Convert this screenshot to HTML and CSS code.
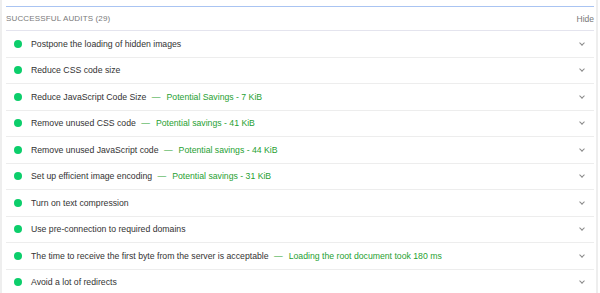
FILE: index.html
```html
<!DOCTYPE html>
<html lang="en">

<head>
    <meta charset="UTF-8">
    <meta name="viewport" content="width=device-width, initial-scale=1.0">
    <title>Successful audits</title>
    <link rel="stylesheet" href="styles.css">
</head>

<body>
    <div class="page">
        <div class="audits">
            <div class="audits-header">
                <span class="audits-title">Successful audits <span class="count">(29)</span></span>
                <span class="hide">Hide</span>
            </div>

            <ul class="audit-list">
                <li class="audit">
                    <span class="dot"></span>
                    <span class="audit-text">Postpone the loading of hidden images</span>
                    <span class="chevron"></span>
                </li>
                <li class="audit">
                    <span class="dot"></span>
                    <span class="audit-text">Reduce CSS code size</span>
                    <span class="chevron"></span>
                </li>
                <li class="audit">
                    <span class="dot"></span>
                    <span class="audit-text">Reduce JavaScript Code Size <span class="savings"><span class="dash">—</span>Potential Savings - 7 KiB</span></span>
                    <span class="chevron"></span>
                </li>
                <li class="audit">
                    <span class="dot"></span>
                    <span class="audit-text">Remove unused CSS code <span class="savings"><span class="dash">—</span>Potential savings - 41 KiB</span></span>
                    <span class="chevron"></span>
                </li>
                <li class="audit">
                    <span class="dot"></span>
                    <span class="audit-text">Remove unused JavaScript code <span class="savings"><span class="dash">—</span>Potential savings - 44 KiB</span></span>
                    <span class="chevron"></span>
                </li>
                <li class="audit">
                    <span class="dot"></span>
                    <span class="audit-text">Set up efficient image encoding <span class="savings"><span class="dash">—</span>Potential savings - 31 KiB</span></span>
                    <span class="chevron"></span>
                </li>
                <li class="audit">
                    <span class="dot"></span>
                    <span class="audit-text">Turn on text compression</span>
                    <span class="chevron"></span>
                </li>
                <li class="audit">
                    <span class="dot"></span>
                    <span class="audit-text">Use pre-connection to required domains</span>
                    <span class="chevron"></span>
                </li>
                <li class="audit">
                    <span class="dot"></span>
                    <span class="audit-text">The time to receive the first byte from the server is acceptable <span class="savings"><span class="dash">—</span>Loading the root document took 180 ms</span></span>
                    <span class="chevron"></span>
                </li>
                <li class="audit">
                    <span class="dot"></span>
                    <span class="audit-text">Avoid a lot of redirects</span>
                    <span class="chevron"></span>
                </li>
            </ul>
        </div>
    </div>
</body>

</html>
```

FILE: styles.css
```css
body {
    margin: 0;
    background: #fff;
    font-family: "Liberation Sans", Arial, sans-serif;
    color: #333;
    overflow: hidden;
}

.page {
    height: 293px;
    border-left: 2px solid #eee;
    border-right: 2px solid #eee;
    width: 598px;
    padding: 6px 2px 0 4px;
    box-sizing: border-box;
}

.audits {
    border-top: 1.5px solid #aac4f2;
}

.audits-header {
    display: flex;
    justify-content: space-between;
    align-items: center;
    height: 23px;
    border-bottom: 1px solid #e4e4ee;
}

.audits-title {
    font-size: 8px;
    text-transform: uppercase;
    letter-spacing: 0.15px;
    color: #7a7a7a;
}

.hide {
    font-size: 8.5px;
    color: #777;
}

.audit-list {
    list-style: none;
    margin: 0;
    padding: 0;
}

.audit {
    display: flex;
    align-items: center;
    height: 26.5px;
    box-sizing: border-box;
    border-bottom: 1px solid #ededed;
    padding: 0 8px;
}

.dot {
    width: 8px;
    height: 8px;
    border-radius: 50%;
    background: #0cce6b;
    flex-shrink: 0;
}

.audit-text {
    flex: 1;
    margin-left: 9px;
    font-size: 8.7px;
    color: #333;
}

.savings {
    color: #1f9f32;
    margin-left: 3px;
}

.dash {
    margin-right: 6px;
}

.chevron {
    width: 3px;
    height: 3px;
    border-right: 1px solid #8a8a8a;
    border-bottom: 1px solid #8a8a8a;
    transform: rotate(45deg);
    margin: -2px 2px 0 0;
}
```
